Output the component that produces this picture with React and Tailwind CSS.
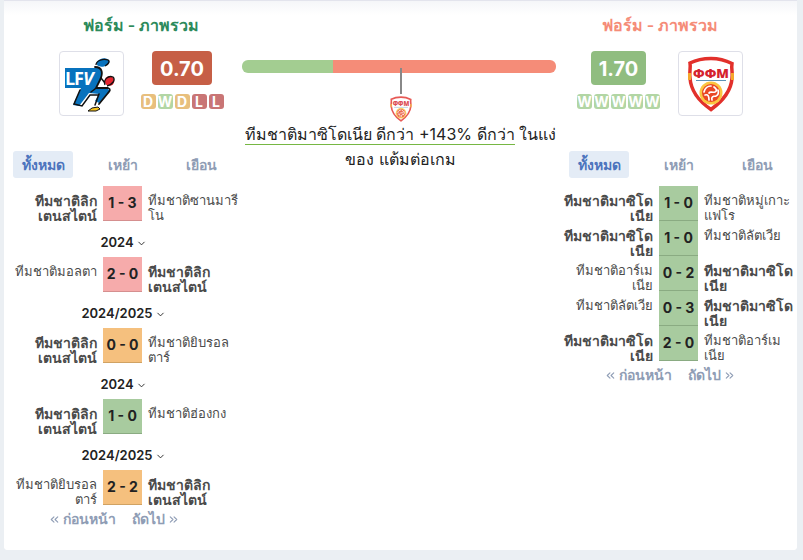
import { ChevronDown, ChevronsLeft, ChevronsRight } from "lucide-react";

const scoreTone = {
  red: "bg-[#f6abab] border-[#d58f8f]",
  orange: "bg-[#f5c07e] border-[#d0a263]",
  green: "bg-[#a8cb9f] border-[#8aab82]",
};

const formTone = {
  D: "bg-[#e8bf7d]",
  W: "bg-[#b2d6a4]",
  L: "bg-[#c97575]",
};

const LIE = ["ทีมชาติลิก", "เตนสไตน์"];
const MKD = ["ทีมชาติมาซิโด", "เนีย"];

const leftMatches = [
  { home: LIE, away: ["ทีมชาติซานมารี", "โน"], score: "1 - 3", tone: "red", own: "home" },
  { season: "2024", home: ["ทีมชาติมอลตา"], away: LIE, score: "2 - 0", tone: "red", own: "away" },
  { season: "2024/2025", home: LIE, away: ["ทีมชาติยิบรอล", "ตาร์"], score: "0 - 0", tone: "orange", own: "home" },
  { season: "2024", home: LIE, away: ["ทีมชาติฮ่องกง"], score: "1 - 0", tone: "green", own: "home" },
  { season: "2024/2025", home: ["ทีมชาติยิบรอล", "ตาร์"], away: LIE, score: "2 - 2", tone: "orange", own: "away" },
];

const rightMatches = [
  { home: MKD, away: ["ทีมชาติหมู่เกาะ", "แฟโร"], score: "1 - 0", tone: "green", own: "home" },
  { home: MKD, away: ["ทีมชาติลัตเวีย"], score: "1 - 0", tone: "green", own: "home" },
  { home: ["ทีมชาติอาร์เม", "เนีย"], away: MKD, score: "0 - 2", tone: "green", own: "away" },
  { home: ["ทีมชาติลัตเวีย"], away: MKD, score: "0 - 3", tone: "green", own: "away" },
  { home: MKD, away: ["ทีมชาติอาร์เม", "เนีย"], score: "2 - 0", tone: "green", own: "home" },
];

function LfvLogo() {
  return (
    <svg viewBox="0 0 56 56" className="size-14" role="img" aria-label="LFV">
      <path d="M2 12h35l-4 20H2z" fill="#0872bd" />
      <path d="M33 12c7 0 7 5 5 11l-5 9h11l3 3-11 12-4-2 4-7-10-1-10 13-6-1 6-13 7-14z" fill="#0872bd" />
      <path d="M32 11c8 0 8 7 5 13l-4 8h12c3 1 2 3 0 5l-9 11" fill="none" stroke="#111" strokeWidth="1.800" strokeLinecap="round" />
      <path d="M38 22l4 5M32 33l-4 3M36 38l-4 11M17 34l-6 14 8 2 8-11 8 0" fill="none" stroke="#111" strokeWidth="1.500" strokeLinecap="round" />
      <ellipse cx="40" cy="6.500" rx="6.500" ry="4" fill="#0872bd" transform="rotate(-14 40 6.500)" />
      <path d="M33 9c0-4 7-7 12-5 2 1 1 4-3 6" fill="none" stroke="#111" strokeWidth="1.300" />
      <circle cx="46.500" cy="25" r="4.800" fill="#e52630" />
      <path d="M42 29c-2-5 3-10 8-8 3 3-1 8-6 9" fill="none" stroke="#111" strokeWidth="1.300" />
      <path d="M25 55l4-3 6-1 2 2-4 2z" fill="#f7c51e" stroke="#111" strokeWidth="1" />
      <text x="2" y="29" fontFamily="Open Sans, sans-serif" fontSize="18" fontWeight="700" fill="#fff">L</text>
      <text x="11" y="29" fontFamily="Open Sans, sans-serif" fontSize="18" fontWeight="700" fill="#fff">F</text>
      <text x="20" y="29" fontFamily="Open Sans, sans-serif" fontSize="18" fontWeight="700" fontStyle="italic" fill="#fff">V</text>
    </svg>
  );
}

function FfmLogo({ className }) {
  return (
    <svg viewBox="0 0 56 56" className={className} role="img" aria-label="ФФМ">
      <path d="M28 2.500c8 0 15 2 21 5-1 6 1 9 0 15-1 13-10 23-21 31C17 46 8 36 7 22c-1-6 1-9 0-15 6-3 13-4.500 21-4.500z" fill="#fff" stroke="#e2302b" strokeWidth="3.500" />
      <path d="M5 17h3v7H5zM48 17h3v7h-3z" fill="#f5a72b" />
      <text x="28" y="21.500" textAnchor="middle" fontFamily="Open Sans, sans-serif" fontSize="13" fontWeight="800" fill="#d5222d">ФФМ</text>
      <path d="M13 24.500h30" stroke="#5d91b6" strokeWidth="1" />
      <circle cx="28" cy="37" r="11.500" fill="#fbc540" />
      <circle cx="28" cy="37" r="9" fill="#e94725" />
      <path d="M21 36c1-4 4-6 7-6M31 31c3 2 3 4 1 5-3 1-5-1-6 1M22 39c3-1 4 1 4 5M29 44c-1-3 1-4 4-4M35 34c1 3 0 5-2 6" fill="none" stroke="#fff" strokeWidth="1.700" strokeLinecap="round" />
    </svg>
  );
}

function Crest({ children }) {
  return (
    <div className="flex h-[65px] w-[65px] items-center justify-center rounded border border-[#dedfe8] bg-white">
      {children}
    </div>
  );
}

function Rating({ value, color, form }) {
  return (
    <div className="flex flex-col items-center font-bold text-white">
      <span className={`flex h-[34px] items-center rounded px-2 pt-[2px] text-xl ${color}`}>{value}</span>
      <div className="mt-[9px] flex gap-[2px]">
        {form.map((letter, i) => (
          <span key={i} className={`flex h-[15px] w-[15px] items-center justify-center rounded-[3px] text-sm ${formTone[letter]}`}>
            {letter}
          </span>
        ))}
      </div>
    </div>
  );
}

function TeamName({ lines, bold, align }) {
  return (
    <td className="w-1/2 p-0 align-top">
      <div className={`h-[35px] overflow-hidden pt-[7px] leading-[15px] whitespace-nowrap ${align} ${bold ? "text-sm/[15px] font-bold" : ""}`}>
        {lines.map((line) => (
          <div key={line}>{line}</div>
        ))}
      </div>
    </td>
  );
}

function Matches({ rows, label }) {
  return (
    <table aria-label={label} className="w-full table-fixed border-collapse text-[13px] text-[#4b4b4b]">
      <colgroup>
        <col />
        <col className="w-[39px]" />
        <col />
      </colgroup>
      {rows.map((row, i) => (
        <tbody key={i}>
          {row.season && (
            <tr>
              <td colSpan={3} className="p-0">
                <button className="flex h-[36px] w-full items-center justify-center gap-[2px] pt-2 pl-[2px] font-semibold text-[#222]">
                  {row.season}
                  <ChevronDown size={11} />
                </button>
              </td>
            </tr>
          )}
          <tr>
            <TeamName lines={row.home} bold={row.own === "home"} align="pr-[6px] text-right" />
            <td className="p-0">
              <div className={`flex h-[35px] items-center justify-center border-b text-sm font-bold whitespace-nowrap text-[#222] ${scoreTone[row.tone]}`}>
                {row.score}
              </div>
            </td>
            <TeamName lines={row.away} bold={row.own === "away"} align="pl-[6px] text-left" />
          </tr>
        </tbody>
      ))}
    </table>
  );
}

function TeamForm({ rows, label }) {
  return (
    <section className="min-w-0">
      <div className="flex h-[27px] items-center pl-[9px] text-sm font-bold text-[#8f9db5]">
        <button className="h-[27px] w-[60px] rounded-[3px] bg-[#e4ecf6] text-[#4c74bd]">ทั้งหมด</button>
        <button className="ml-[10px] flex-1">เหย้า</button>
        <button className="flex-1">เยือน</button>
      </div>
      <div className="mt-2">
        <Matches rows={rows} label={label} />
      </div>
      <div className="flex h-7 justify-center gap-4 pr-[18px] text-sm font-bold text-[#8f9db5]">
        <button className="flex items-center gap-[2px]"><ChevronsLeft size={13} />ก่อนหน้า</button>
        <button className="flex items-center gap-[2px]">ถัดไป<ChevronsRight size={13} /></button>
      </div>
    </section>
  );
}

export default function App() {
  return (
    <div className="min-h-screen bg-[#ebeff3] pr-[6px] pb-[10px] pl-1 font-[Inter,Tahoma,sans-serif]">
      <main className="rounded-b border-t border-[#e3e4ed] bg-white bg-linear-to-b from-[#f5f6f9] to-white to-[14px] pb-[17px]">
        <div className="grid grid-cols-[238px_1fr_238px]">
          <header className="flex flex-col items-center pt-3 pl-[36px]">
            <h2 className="text-base leading-6 font-semibold text-[#2c8a5b]">ฟอร์ม - ภาพรวม</h2>
            <div className="mt-[14px] flex gap-[17px]">
              <Crest><LfvLogo /></Crest>
              <Rating value="0.70" color="bg-[#c65f46]" form={["D", "W", "D", "L", "L"]} />
            </div>
          </header>
          <div className="pt-[59px] pr-[3px]">
            <div className="flex h-[13px] overflow-hidden rounded-md">
              <div className="w-[29%] bg-[#a3cd91]" />
              <div className="flex-1 bg-[#f58c78]" />
            </div>
          </div>
          <header className="flex flex-col items-center pt-3 pr-[36px]">
            <h2 className="text-base leading-6 font-semibold text-[#f58c78]">ฟอร์ม - ภาพรวม</h2>
            <div className="mt-[14px] flex gap-[18px]">
              <Rating value="1.70" color="bg-[#90bd80]" form={["W", "W", "W", "W", "W"]} />
              <Crest><FfmLogo className="size-14" /></Crest>
            </div>
          </header>
        </div>
        <div className="grid grid-cols-[238px_1fr_238px]">
          <div className="pt-[35px] pr-px"><TeamForm rows={leftMatches} label="Liechtenstein" /></div>
          <div className="-mt-[48px] flex flex-col items-center text-center text-base text-[#222]">
            <div className="h-[26px] w-[2px] bg-[#888]" />
            <FfmLogo className="mt-[2px] size-[26px] opacity-80" />
            <p className="leading-[25px] whitespace-nowrap">
              <span className="border-b border-[#76b743]">ทีมชาติมาซิโดเนีย ดีกว่า +143% ดีกว่า</span> ในแง่
              <br />
              ของ แต้มต่อเกม
            </p>
          </div>
          <div className="pt-[35px] pl-px"><TeamForm rows={rightMatches} label="North Macedonia" /></div>
        </div>
      </main>
    </div>
  );
}
